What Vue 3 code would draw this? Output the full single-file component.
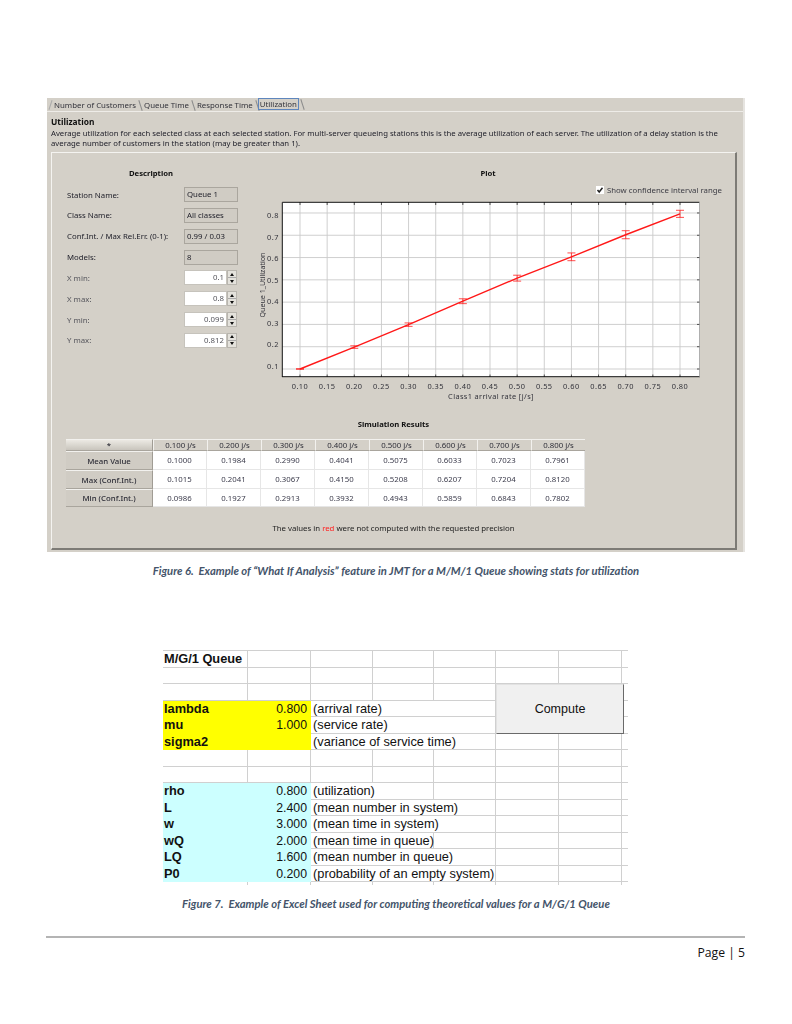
<script setup>
const tabs = ['Number of Customers', 'Queue Time', 'Response Time', 'Utilization']
const infoRows = [
  { label: 'Station Name:', value: 'Queue 1' },
  { label: 'Class Name:', value: 'All classes' },
  { label: 'Conf.Int. / Max Rel.Err. (0-1):', value: '0.99 / 0.03' },
  { label: 'Models:', value: '8' }
]
const spinRows = [
  { label: 'X min:', value: '0.1' },
  { label: 'X max:', value: '0.8' },
  { label: 'Y min:', value: '0.099' },
  { label: 'Y max:', value: '0.812' }
]

const px = v => 300 + (v - 0.1) * 542.86
const py = v => 369 - (v - 0.1) * 222.9
const mean = [0.1, 0.1984, 0.299, 0.4041, 0.5075, 0.6033, 0.7023, 0.7961]
const maxV = [0.1015, 0.2041, 0.3067, 0.415, 0.5208, 0.6207, 0.7204, 0.812]
const minV = [0.0986, 0.1927, 0.2913, 0.3932, 0.4943, 0.5859, 0.6843, 0.7802]
const xs = [0.1, 0.2, 0.3, 0.4, 0.5, 0.6, 0.7, 0.8]
const linePoints = xs.map((x, i) => `${px(x)},${py(mean[i])}`).join(' ')
const bars = xs.map((x, i) => ({ x: px(x), top: py(maxV[i]), bottom: py(minV[i]) }))
const xTicks = Array.from({ length: 15 }, (_, i) => ({
  x: px(0.1 + i * 0.05),
  label: (0.1 + i * 0.05).toFixed(2)
}))
const yTicks = Array.from({ length: 8 }, (_, i) => ({
  y: py(0.1 + i * 0.1),
  labelY: 369 - i * 21.57,
  label: (0.1 + i * 0.1).toFixed(1)
}))

const resultHead = ['0.100 j/s', '0.200 j/s', '0.300 j/s', '0.400 j/s', '0.500 j/s', '0.600 j/s', '0.700 j/s', '0.800 j/s']
const resultRows = [
  { name: 'Mean Value', values: ['0.1000', '0.1984', '0.2990', '0.4041', '0.5075', '0.6033', '0.7023', '0.7961'] },
  { name: 'Max (Conf.Int.)', values: ['0.1015', '0.2041', '0.3067', '0.4150', '0.5208', '0.6207', '0.7204', '0.8120'] },
  { name: 'Min (Conf.Int.)', values: ['0.0986', '0.1927', '0.2913', '0.3932', '0.4943', '0.5859', '0.6843', '0.7802'] }
]

const sheetData = [
  { title: 'M/G/1 Queue' },
  {},
  {},
  { label: 'lambda', value: '0.800', note: '(arrival rate)', span: 3, fill: 'yellow' },
  { label: 'mu', value: '1.000', note: '(service rate)', span: 3, fill: 'yellow' },
  { label: 'sigma2', value: '', note: '(variance of service time)', span: 3, fill: 'yellow' },
  {},
  {},
  { label: 'rho', value: '0.800', note: '(utilization)', span: 2, fill: 'cyan' },
  { label: 'L', value: '2.400', note: '(mean number in system)', span: 3, fill: 'cyan' },
  { label: 'w', value: '3.000', note: '(mean time in system)', span: 3, fill: 'cyan' },
  { label: 'wQ', value: '2.000', note: '(mean time in queue)', span: 2, fill: 'cyan' },
  { label: 'LQ', value: '1.600', note: '(mean number in queue)', span: 3, fill: 'cyan' },
  { label: 'P0', value: '0.200', note: '(probability of an empty system)', span: 3, fill: 'cyan' },
  { stub: true }
]
const sheetCells = []
sheetData.forEach((row, r) => {
  const rowNo = r + 1
  let col = 1
  const add = (span, text, cls) => {
    const last = col === 8 ? ' last' : ''
    sheetCells.push({ key: `${r}-${col}`, text, cls: cls + last, area: `${rowNo} / ${col} / ${rowNo + 1} / ${col + span}` })
    col += span
  }
  if (row.fill) {
    add(1, row.label, `fill ${row.fill} bold`)
    add(1, row.value, `fill ${row.fill} num`)
    add(row.span, row.note, 'note')
  } else if (row.title) {
    add(1, row.title, 'bold')
  }
  while (col <= 8) add(1, '', row.stub ? 'stub' : '')
})
</script>

<template>
  <div class="page">
    <section class="jmt">
      <nav class="tabs">
        <span v-for="(t, i) in tabs" :key="t" class="tab" :class="{ active: i === 3 }">{{ t }}</span>
      </nav>
      <header class="intro">
        <h2>Utilization</h2>
        <p>Average utilization for each selected class at each selected station. For multi-server queueing stations this is the average utilization of each server. The utilization of a delay station is the average number of customers in the station (may be greater than 1).</p>
      </header>
      <div class="inner">
        <div class="top">
          <div class="desc">
            <h3>Description</h3>
            <div class="fields">
              <div v-for="r in infoRows" :key="r.label" class="field">
                <span>{{ r.label }}</span>
                <span class="readonly">{{ r.value }}</span>
              </div>
              <div v-for="r in spinRows" :key="r.label" class="field soft">
                <span>{{ r.label }}</span>
                <span class="spinner">
                  <span class="input">{{ r.value }}</span>
                  <span class="btns"><i class="up"></i><i class="down"></i></span>
                </span>
              </div>
            </div>
          </div>
          <div class="plot">
            <h3>Plot</h3>
            <label class="show">
              <span class="check">
                <svg width="8" height="8" viewBox="0 0 8 8"><path d="M1.5 4 L3.2 6 L6.5 1.8" fill="none" stroke="#222" stroke-width="1.5" /></svg>
              </span>
              Show confidence interval range
            </label>
            <svg class="chart" width="470" height="210" viewBox="250 196 470 210">
              <rect x="282" y="202" width="418" height="175" fill="#fff" />
              <g stroke="#c9c9c9" stroke-width="0.9">
                <line v-for="t in xTicks" :key="t.x" :x1="t.x" :x2="t.x" y1="202" y2="377" />
                <line v-for="t in yTicks" :key="t.y" x1="282" x2="700" :y1="t.y" :y2="t.y" />
              </g>
              <g stroke="#111" stroke-width="0.7">
                <line v-for="t in xTicks" :key="'a' + t.x" :x1="t.x" :x2="t.x" y1="374.5" y2="377" />
                <line v-for="t in xTicks" :key="'b' + t.x" :x1="t.x" :x2="t.x" y1="202" y2="205" />
                <line v-for="t in yTicks" :key="'d' + t.y" x1="697" x2="700" :y1="t.y" :y2="t.y" />
              </g>
              <path d="M282.3 377 V202.3 H699.5" fill="none" stroke="#111" stroke-width="1" />
              <line x1="282" x2="700" y1="376.7" y2="376.7" stroke="#111" stroke-width="1" />
              <line x1="699.5" x2="699.5" y1="202" y2="377" stroke="#9a9a9a" stroke-width="0.8" />
              <g stroke="#ff2020" stroke-width="0.8">
                <g v-for="b in bars" :key="b.x">
                  <line :x1="b.x" :x2="b.x" :y1="b.top" :y2="b.bottom" />
                  <line :x1="b.x - 4" :x2="b.x + 4" :y1="b.top" :y2="b.top" />
                  <line :x1="b.x - 4" :x2="b.x + 4" :y1="b.bottom" :y2="b.bottom" />
                </g>
              </g>
              <polyline :points="linePoints" fill="none" stroke="#ff1818" stroke-width="1.4" />
              <g class="ticks">
                <text v-for="t in yTicks" :key="'y' + t.y" x="279" :y="t.labelY" text-anchor="end">{{ t.label }}</text>
                <text v-for="t in xTicks" :key="'x' + t.x" :x="t.x" y="389" text-anchor="middle">{{ t.label }}</text>
              </g>
              <text class="axis" x="491" y="399" text-anchor="middle">Class1 arrival rate [j/s]</text>
              <text class="axis ytitle" transform="translate(265 285) rotate(-90)" text-anchor="middle">Queue 1_Utilization</text>
            </svg>
          </div>
        </div>
        <h3 class="sim">Simulation Results</h3>
        <div class="results">
          <div class="rh corner">*</div>
          <div v-for="h in resultHead" :key="h" class="ch">{{ h }}</div>
          <template v-for="r in resultRows" :key="r.name">
            <div class="rh">{{ r.name }}</div>
            <div v-for="(v, i) in r.values" :key="i" class="val">{{ v }}</div>
          </template>
        </div>
        <p class="hint">The values in <span class="red">red</span> were not computed with the requested precision</p>
      </div>
    </section>

    <p class="caption first">Figure 6.&nbsp; Example of “What If Analysis” feature in JMT for a M/M/1 Queue showing stats for utilization</p>

    <section class="sheet">
      <div v-for="c in sheetCells" :key="c.key" class="cell" :class="c.cls" :style="{ gridArea: c.area }">{{ c.text }}</div>
      <button class="compute" type="button">Compute</button>
    </section>

    <p class="caption second">Figure 7.&nbsp; Example of Excel Sheet used for computing theoretical values for a M/G/1 Queue</p>

    <footer class="foot">Page | 5</footer>
  </div>
</template>

<style>
html, body { margin: 0; background: #fff; }
</style>

<style scoped>
.page {
  width: 792px;
  height: 1024px;
  box-sizing: border-box;
  padding-top: 98px;
  overflow: hidden;
  font-family: "Noto Sans", sans-serif;
}
.jmt {
  width: 698px;
  height: 454px;
  margin-left: 47px;
  box-sizing: border-box;
  background: #d4d0c8;
  border-right: 2px solid #e6e4e0;
  color: #22222c;
  font-size: 7.8px;
  display: flex;
  flex-direction: column;
  filter: blur(0.35px);
}
.tabs {
  height: 14px;
  box-sizing: border-box;
  flex: none;
  display: flex;
  align-items: center;
  padding-left: 7px;
  border-bottom: 1px solid #eeece8;
  color: #33333b;
  font-size: 7.85px;
}
.tab {
  position: relative;
  margin-right: 8px;
  white-space: nowrap;
}
.tab:first-child::before {
  content: "";
  position: absolute;
  left: -4px;
  top: 0;
  height: 10px;
  width: 1px;
  background: #aaa;
  transform: rotate(18deg);
}
.tab::after {
  content: "";
  position: absolute;
  right: -5px;
  top: 0;
  height: 11px;
  width: 1px;
  background: #8c8c8c;
  transform: rotate(-18deg);
}
.tab.active {
  border: 1px solid #5f86bd;
  padding: 0 1px;
  margin: -1px 0 0 -3px;
  line-height: 10px;
}
.intro { padding: 4px 0 0 4px; flex: none; }
.intro h2 {
  margin: 0;
  font-size: 8.4px;
  line-height: 12px;
  font-weight: 700;
  color: #111;
}
.intro p {
  margin: 0;
  width: 672px;
  font-size: 7.74px;
  line-height: 10px;
}
.inner {
  flex: none;
  box-sizing: border-box;
  width: 686px;
  height: 398px;
  margin: 4px 0 0 4px;
  border-top: 1px solid #f4f3f0;
  border-left: 1px solid #f4f3f0;
  border-right: 2px solid #7d7b76;
  border-bottom: 2px solid #7d7b76;
}
.top {
  height: 265px;
  display: flex;
}
h3 {
  margin: 0;
  font-size: 7.7px;
  line-height: 10px;
  font-weight: 700;
  color: #111;
  text-align: center;
}
.desc {
  width: 171px;
  margin-left: 15px;
  padding-top: 15px;
  flex: none;
}
.desc h3 { width: 168px; }
.fields {
  margin-top: 9px;
  display: flex;
  flex-direction: column;
  gap: 5.85px;
}
.field {
  display: grid;
  grid-template-columns: 117px 54px;
  height: 15px;
  align-items: center;
  white-space: nowrap;
}
.field.soft { color: #55555c; }
.readonly {
  height: 15px;
  line-height: 13px;
  box-sizing: border-box;
  border: 1px solid #aaa69e;
  padding-left: 2px;
  background: #d0ccc4;
}
.spinner {
  display: flex;
  width: 53px;
  height: 15px;
}
.input {
  width: 43px;
  box-sizing: border-box;
  background: #fff;
  border: 1px solid #c6c3bc;
  text-align: right;
  padding-right: 2px;
  line-height: 13px;
}
.btns {
  flex: 1;
  display: flex;
  flex-direction: column;
  border: 1px solid #b8b5ae;
  box-sizing: border-box;
  background: #e4e2dc;
}
.btns i {
  flex: 1;
  display: flex;
  align-items: center;
  justify-content: center;
}
.btns i::before {
  content: "";
  border-left: 2.5px solid transparent;
  border-right: 2.5px solid transparent;
}
.btns .up { border-bottom: 1px solid #aaa; }
.btns .up::before { border-bottom: 3px solid #111; }
.btns .down::before { border-top: 3px solid #111; }
.plot {
  flex: 1;
  padding-top: 15px;
  display: flex;
  flex-direction: column;
}
.plot h3 { width: 500px; }
.show {
  height: 11px;
  margin-top: 6px;
  align-self: flex-end;
  margin-right: 16px;
  display: flex;
  align-items: center;
  gap: 3px;
  color: #3c3c44;
}
.check {
  width: 8px;
  height: 8px;
  background: #fff;
  display: flex;
}
.chart {
  display: block;
  margin-left: 12px;
  margin-top: 1px;
}
.ticks text, .axis {
  font-family: "Noto Sans", sans-serif;
  font-size: 7.4px;
  fill: #33333b;
}
.ticks text { letter-spacing: 0.5px; }
.axis { letter-spacing: 0.35px; }
.ytitle { font-size: 7.1px; letter-spacing: 0; }
.sim {
  margin-top: 1px;
  margin-bottom: 10px;
}
.results {
  display: grid;
  grid-template-columns: 87px repeat(8, 54px);
  grid-template-rows: 12px 19px 19px 18px;
  width: 519px;
  margin-left: 14px;
}
.results > div {
  display: flex;
  align-items: center;
  justify-content: center;
  box-sizing: border-box;
}
.rh {
  background: #d0ccc4;
  border-top: 1px solid #f2f1ee;
  border-right: 1px solid #a09c94;
  border-bottom: 1px solid #a9a59d;
  font-weight: 500;
  color: #2c2c36;
}
.corner { background: linear-gradient(#ece9e3, #c9c5bd); }
.ch {
  background: #d4d0c8;
  border-top: 1px solid #f2f1ee;
  border-left: 1px solid #f2f1ee;
  border-bottom: 1px solid #a9a59d;
  color: #2e2e38;
}
.val {
  background: #fff;
  border-right: 1px solid #e6e6e6;
  border-bottom: 1px solid #e6e6e6;
  color: #3c3c4c;
}
.hint {
  margin: 16px 0 0;
  line-height: 10px;
  text-align: center;
  color: #222;
}
.red { color: #ff2020; }
.caption {
  margin: 0;
  height: 14px;
  line-height: 14px;
  text-align: center;
  font-family: Lato, sans-serif;
  font-size: 11.25px;
  font-weight: 700;
  font-style: italic;
  color: #44546a;
}
.caption.first { margin-top: 12px; }
.caption.second { margin-top: 13px; }
.sheet {
  margin: 72px 0 0 163px;
  width: 465px;
  height: 234px;
  display: grid;
  grid-template-columns: 85px 63px 62px 61px 62px 63px 63px 6px;
  grid-template-rows: repeat(14, 16.5px) 3px;
  border-top: 1px solid #d0d0d0;
  box-sizing: border-box;
  font-family: "Liberation Sans", Arial, sans-serif;
  font-size: 12.8px;
  color: #111;
}
.cell {
  box-sizing: border-box;
  border-right: 1px solid #d0d0d0;
  border-bottom: 1px solid #d0d0d0;
  line-height: 16px;
  white-space: nowrap;
  padding-left: 2px;
  min-width: 0;
}
.cell.last { border-right: none; }
.cell.stub { border-bottom: none; }
.cell.bold { font-weight: 700; padding-left: 1px; }
.cell.fill { border-color: transparent; }
.cell.num { text-align: right; padding-right: 3px; font-size: 12.3px; }
.yellow { background: #ffff00; }
.cyan { background: #ccffff; }
.compute {
  grid-area: 3 / 6 / 6 / 8;
  width: calc(100% + 2px);
  margin: 0;
  padding: 0;
  background: #f0f0f0;
  border: none;
  border-top: 1px solid #e2e2e2;
  border-left: 1px solid #e2e2e2;
  border-right: 1px solid #6a6a6a;
  border-bottom: 1px solid #6a6a6a;
  font: 12.5px "Liberation Sans", Arial, sans-serif;
  color: #111;
}
.foot {
  width: 699px;
  margin: 25px 0 0 46px;
  border-top: 2px solid #b4b4b4;
  padding-top: 7px;
  text-align: right;
  font-family: "Open Sans", sans-serif;
  font-size: 12.2px;
  line-height: 16px;
  color: #111;
}
</style>
